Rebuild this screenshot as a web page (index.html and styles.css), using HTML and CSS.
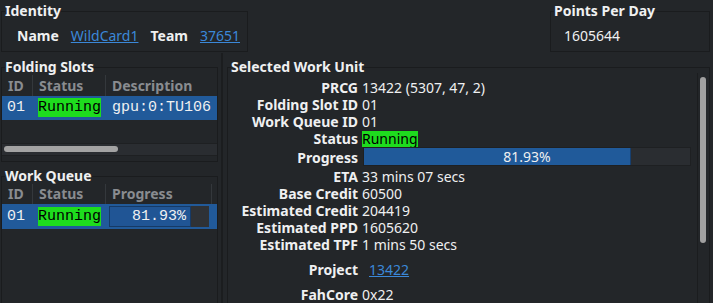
FILE: index.html
```html
<!DOCTYPE html>
<html>
<head>
<meta charset="utf-8">
<link rel="stylesheet" href="styles.css">
</head>
<body>
<div class="top">
  <fieldset class="group identity">
    <legend>Identity</legend>
    <div class="idrow">
      <span class="lbl">Name</span><a class="link">WildCard1</a>
      <span class="lbl">Team</span><a class="link">37651</a>
    </div>
  </fieldset>
  <fieldset class="group ppd">
    <legend>Points Per Day</legend>
    <div class="ppd-val">1605644</div>
  </fieldset>
</div>
<div class="main">
  <div class="left">
    <fieldset class="group slots">
      <legend>Folding Slots</legend>
      <div class="thead cols-slots">
        <div class="th">ID</div><div class="th">Status</div><div class="th">Description</div>
      </div>
      <div class="trow cols-slots">
        <div class="td c1">01</div>
        <div class="td c2"><span class="run">Running</span></div>
        <div class="td c3">gpu:0:TU106</div>
      </div>
      <div class="filler"></div>
      <div class="hscroll"><div class="hhandle"></div></div>
    </fieldset>
    <fieldset class="group queue">
      <legend>Work Queue</legend>
      <div class="thead cols-queue">
        <div class="th">ID</div><div class="th">Status</div><div class="th">Progress</div><div class="th"></div>
      </div>
      <div class="trow qrow cols-queue">
        <div class="td c1">01</div>
        <div class="td c2"><span class="run">Running</span></div>
        <div class="td c3">
          <div class="qbar"><div class="qfill" style="width:81.93%"></div><span class="qtext">81.93%</span></div>
        </div>
        <div class="td"></div>
      </div>
    </fieldset>
  </div>
  <div class="splitter"></div>
  <fieldset class="group wu">
    <legend>Selected Work Unit</legend>
    <div class="wu-body">
      <div class="form">
        <div class="fl">PRCG</div><div class="fv">13422 (5307, 47, 2)</div>
        <div class="fl">Folding Slot ID</div><div class="fv">01</div>
        <div class="fl">Work Queue ID</div><div class="fv">01</div>
        <div class="fl">Status</div><div class="fv"><span class="run2">Running</span></div>
        <div class="fl prog-l">Progress</div>
        <div class="fv prog-v"><div class="bar"><div class="fill" style="width:81.93%"></div><span class="bartext">81.93%</span></div></div>
        <div class="fl">ETA</div><div class="fv">33 mins 07 secs</div>
        <div class="fl">Base Credit</div><div class="fv">60500</div>
        <div class="fl">Estimated Credit</div><div class="fv">204419</div>
        <div class="fl">Estimated PPD</div><div class="fv">1605620</div>
        <div class="fl">Estimated TPF</div><div class="fv">1 mins 50 secs</div>
        <div class="fl proj">Project</div><div class="fv proj"><a class="link plink">13422</a></div>
        <div class="fl">FahCore</div><div class="fv">0x22</div>
      </div>
      <div class="vscroll"><div class="vhandle"></div></div>
    </div>
  </fieldset>
</div>
</body>
</html>
```

FILE: styles.css
```css
* { box-sizing: border-box; }
html, body { margin: 0; padding: 0; }
body {
  background: #232629;
  color: #eff0f1;
  font: 14px/17px "Noto Sans", "DejaVu Sans", sans-serif;
  width: 713px;
  height: 303px;
  overflow: hidden;
}
.group {
  border: 1px solid #1a1c1e;
  margin: 0;
  padding: 0;
  min-width: 0;
}
.group > legend {
  padding: 0;
  margin-left: 3px;
  font-weight: bold;
  line-height: 16px;
}
.link { color: #3b88d8; text-decoration: underline; }
.lbl { font-weight: bold; }

.top {
  display: flex;
  justify-content: space-between;
  padding: 3px 3px 0 1px;
  height: 59px;
}
.identity { width: 247px; height: 49px; }
.idrow {
  display: flex;
  align-items: center;
  height: 32px;
  padding-left: 15px;
}
.idrow .lbl { margin-right: 12px; }
.idrow .link { margin-right: 12px; }
.ppd { width: 160px; height: 49px; }
.ppd-val { height: 32px; display: flex; align-items: center; padding-left: 13px; }

.main { display: flex; height: 270px; }
.left {
  width: 217px;
  margin-left: 1px;
  display: flex;
  flex-direction: column;
  gap: 6px;
}
.slots { height: 103px; display: flex; flex-direction: column; }
.queue { flex: 1; }
.splitter {
  width: 2px;
  margin: -6px 4px 0 3px;
  background: #1b1d1f;
}
.wu { width: 483px; }

.thead, .trow { display: grid; }
.cols-slots { grid-template-columns: 31px 73px 1fr; }
.cols-queue { grid-template-columns: 31px 73px 106px 1fr; }
.thead { height: 21px; }
.queue .thead { height: 20px; }
.th {
  color: #898c90;
  font-weight: bold;
  line-height: 21px;
  padding-left: 6px;
  border-right: 1px solid #34383c;
  white-space: nowrap;
}
.queue .th { line-height: 20px; }
.th:last-child { border-right: none; }
.trow {
  height: 24px;
  background: #215a9a;
  font: 15px/24px "Liberation Mono", "DejaVu Sans Mono", monospace;
  color: #eff0f1;
  white-space: nowrap;
  overflow: hidden;
}
.qrow { height: 25px; line-height: 25px; }
.td { padding-left: 5px; }
.td.c3 { padding-left: 6px; }
.run {
  display: inline-block;
  background: #1edc1e;
  color: #000;
  line-height: 19px;
}
.filler { height: 23px; }
.hscroll {
  height: 13px;
  background: #2a2d31;
  border-top: 1px solid #1e2022;
  border-bottom: 1px solid #1e2022;
  padding: 2px 0 0 2px;
}
.hhandle {
  width: 114px;
  height: 6px;
  border-radius: 3px;
  background: #a3a3a3;
}
.qrow .c3 { padding: 2px 0 2px 3px; }
.qbar {
  position: relative;
  width: 100px;
  height: 21px;
  background: #2f3236;
  display: flex;
}
.qfill {
  height: 100%;
  background: #205595;
  border: 1px solid #163a66;
}
.qtext {
  position: absolute;
  inset: 0;
  text-align: center;
  line-height: 21px;
}

.wu-body { display: flex; margin-top: -2px; height: 240px; }
.form {
  flex: 1;
  display: grid;
  grid-template-columns: 130px 1fr;
  column-gap: 4px;
  align-content: start;
  padding-top: 6px;
}
.fl { font-weight: bold; text-align: right; white-space: nowrap; }
.fv { white-space: nowrap; }
.run2 {
  display: inline-block;
  background: #1edc1e;
  color: #000;
  line-height: 16px;
}
.prog-l { line-height: 21px; }
.prog-v { height: 21px; padding: 0 6px 2px 1px; }
.bar {
  position: relative;
  height: 19px;
  background: #2a2d31;
  border: 1px solid #1e2022;
  display: flex;
}
.fill { height: 100%; background: #205a9a; border-right: 1px solid #173f6e; }
.bartext {
  position: absolute;
  inset: 0;
  text-align: center;
  line-height: 17px;
}
.proj { padding: 8px 0; }
.plink { margin-left: 7px; }
.vscroll {
  width: 12px;
  border-left: 1px solid #1b1d1f;
  padding: 4px 0 0 2px;
}
.vhandle {
  width: 6px;
  height: 166px;
  border-radius: 3px;
  background: #a0a0a0;
}
```
